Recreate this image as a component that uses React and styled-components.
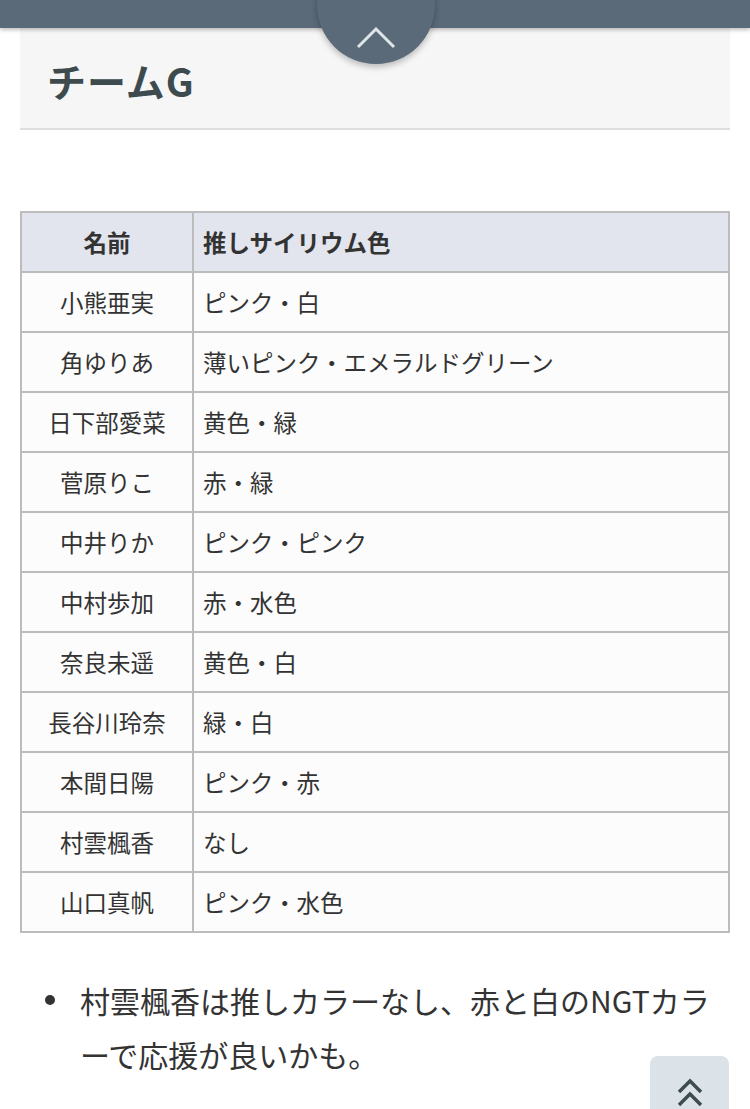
import React from "react";
import styled, { createGlobalStyle } from "styled-components";

const GlobalStyle = createGlobalStyle`
  html, body {
    margin: 0;
    padding: 0;
    background: #ffffff;
    font-family: "Noto Sans CJK JP", "Noto Sans", sans-serif;
    color: #333333;
  }
`;

const TopBar = styled.div`
  position: relative;
  height: 28px;
  background: #5a6a78;
  box-shadow: 0 2px 4px rgba(0, 0, 0, 0.25);
  z-index: 2;
`;

const CloseTab = styled.div`
  position: absolute;
  left: 317px;
  top: -54px;
  width: 118px;
  height: 118px;
  border-radius: 50%;
  background: #5a6a78;
  box-shadow: 0 3px 6px rgba(0, 0, 0, 0.25);
  display: flex;
  align-items: flex-end;
  justify-content: center;
  padding-bottom: 14px;
  box-sizing: border-box;

  svg {
    width: 40px;
    height: 24px;
  }
`;

const Page = styled.div`
  padding: 0 20px;
`;

const HeadingBox = styled.div`
  background: #f6f6f6;
  border-bottom: 2px solid #dedede;
  height: 100px;
  display: flex;
  align-items: center;
  padding: 0 27px;
  margin-bottom: 81px;
`;

const Heading = styled.h2`
  margin: 4px 0 0;
  font-size: 39px;
  font-weight: 700;
  color: #3d4b4f;
  letter-spacing: 1px;
`;

const Table = styled.table`
  width: 100%;
  border-collapse: collapse;
  border: 2px solid #bcbcbc;
  font-size: 23.5px;
`;

const Th = styled.th`
  height: 58px;
  padding: 0 9px;
  background: #e2e5ee;
  border: 2px solid #bcbcbc;
  font-weight: 700;
  color: #333;
  text-align: ${(p) => (p.center ? "center" : "left")};
  width: ${(p) => p.width || "auto"};
`;

const Td = styled.td`
  height: 58px;
  padding: 0 9px;
  background: #fcfcfc;
  border: 2px solid #bcbcbc;
  color: #333;
  text-align: ${(p) => (p.center ? "center" : "left")};
`;

const List = styled.ul`
  margin: 40px 0 0;
  padding: 0 0 0 25px;
  list-style: none;
  font-size: 30px;
  line-height: 54px;
  color: #333;
`;

const Item = styled.li`
  display: flex;
  align-items: flex-start;
`;

const Bullet = styled.span`
  flex: none;
  width: 10px;
  height: 10px;
  margin: 22px 25px 0 0;
  border-radius: 50%;
  background: #333;
`;

const ScrollTop = styled.div`
  position: fixed;
  left: 650px;
  top: 1056px;
  width: 79px;
  height: 79px;
  border-radius: 8px;
  background: #dce3e8;
  display: flex;
  justify-content: center;
  padding-top: 22px;
  box-sizing: border-box;

  svg {
    width: 28px;
    height: 30px;
  }
`;

const members = [
  ["小熊亜実", "ピンク・白"],
  ["角ゆりあ", "薄いピンク・エメラルドグリーン"],
  ["日下部愛菜", "黄色・緑"],
  ["菅原りこ", "赤・緑"],
  ["中井りか", "ピンク・ピンク"],
  ["中村歩加", "赤・水色"],
  ["奈良未遥", "黄色・白"],
  ["長谷川玲奈", "緑・白"],
  ["本間日陽", "ピンク・赤"],
  ["村雲楓香", "なし"],
  ["山口真帆", "ピンク・水色"],
];

export default function App() {
  return (
    <>
      <GlobalStyle />
      <TopBar>
        <CloseTab>
          <svg viewBox="0 0 40 24" fill="none">
            <path d="M2 21 L20 3 L38 21" stroke="#dfe6ea" strokeWidth="3" />
          </svg>
        </CloseTab>
      </TopBar>
      <Page>
        <HeadingBox>
          <Heading>チームG</Heading>
        </HeadingBox>
        <Table>
          <thead>
            <tr>
              <Th center width="152px">名前</Th>
              <Th>推しサイリウム色</Th>
            </tr>
          </thead>
          <tbody>
            {members.map(([name, color]) => (
              <tr key={name}>
                <Td center>{name}</Td>
                <Td>{color}</Td>
              </tr>
            ))}
          </tbody>
        </Table>
        <List>
          <Item>
            <Bullet />
            <span>村雲楓香は推しカラーなし、赤と白のNGTカラーで応援が良いかも。</span>
          </Item>
        </List>
      </Page>
      <ScrollTop>
        <svg viewBox="0 0 28 30" fill="none">
          <path d="M3 14 L14 3 L25 14" stroke="#3e4c52" strokeWidth="3.5" />
          <path d="M3 27 L14 16 L25 27" stroke="#3e4c52" strokeWidth="3.5" />
        </svg>
      </ScrollTop>
    </>
  );
}
